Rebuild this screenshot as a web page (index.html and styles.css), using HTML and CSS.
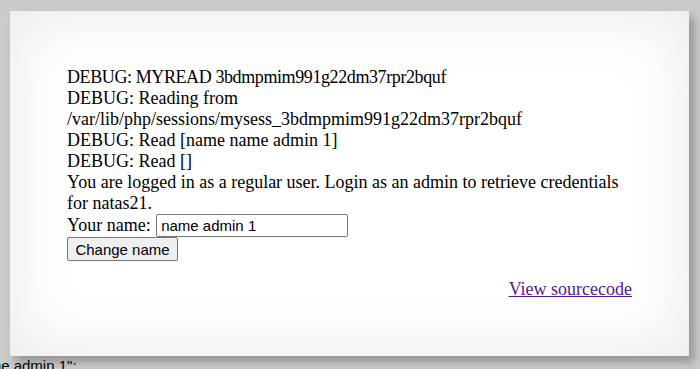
FILE: index.html
```html
<!DOCTYPE html>
<html>
<head>
<meta charset="utf-8">
<link rel="stylesheet" href="styles.css">
</head>
<body>
<div class="page">
  <div class="content">
    <div class="line tight">DEBUG: MYREAD 3bdmpmim991g22dm37rpr2bquf</div>
    <div class="line">DEBUG: Reading from /var/lib/php/sessions/mysess_3bdmpmim991g22dm37rpr2bquf</div>
    <div class="line">DEBUG: Read [name name admin 1]</div>
    <div class="line">DEBUG: Read []</div>
    <div class="line">You are logged in as a regular user. Login as an admin to retrieve credentials for natas21.</div>
    <form class="form">
      <div class="row">Your name: <input class="field" type="text" value="name admin 1"></div>
      <button class="btn" type="button">Change name</button>
    </form>
    <div class="source"><a href="#" class="link">View sourcecode</a></div>
  </div>
</div>
<div class="below">name admin 1";</div>
</body>
</html>
```
FILE: styles.css
```css
html, body {
  margin: 0;
  padding: 0;
  background: #cbcbcb;
  overflow: hidden;
}
body {
  width: 700px;
  height: 369px;
}
.page {
  margin: 11px 0 0 10px;
  width: 679px;
  height: 345px;
  box-sizing: border-box;
  background: #ffffff;
  box-shadow: 5px 6px 9px rgba(0,0,0,0.28), inset 0 0 70px rgba(0,0,0,0.09);
  padding: 56px 57px 0 57px;
  font-family: "Liberation Serif", "Times New Roman", serif;
  font-size: 18px;
  line-height: 21px;
  color: #000;
}
.line {
  margin: 0;
}
.tight {
  letter-spacing: -0.4px;
}
.form {
  margin: 0;
}
.row {
  height: 23px;
  line-height: 23px;
}
.field {
  box-sizing: border-box;
  width: 192px;
  height: 23px;
  margin: 0 0 0 1px;
  padding: 1px 4px;
  border: 1px solid #767676;
  border-radius: 2px;
  font-family: "Liberation Sans", Arial, sans-serif;
  font-size: 15px;
  color: #000;
  vertical-align: top;
}
.btn {
  display: block;
  box-sizing: border-box;
  width: 111px;
  height: 24px;
  margin: 0;
  padding: 0 6px;
  border: 1px solid #767676;
  border-radius: 2px;
  background: #efefef;
  font-family: "Liberation Sans", Arial, sans-serif;
  font-size: 15px;
  color: #000;
}
.source {
  text-align: right;
  margin-top: 18px;
}
.link {
  color: #551a8b;
  text-decoration: underline;
}
.below {
  margin-top: 1px;
  margin-left: -28px;
  font-family: "Liberation Sans", Arial, sans-serif;
  font-size: 15px;
  line-height: 18px;
  color: #000;
  white-space: nowrap;
}
```
